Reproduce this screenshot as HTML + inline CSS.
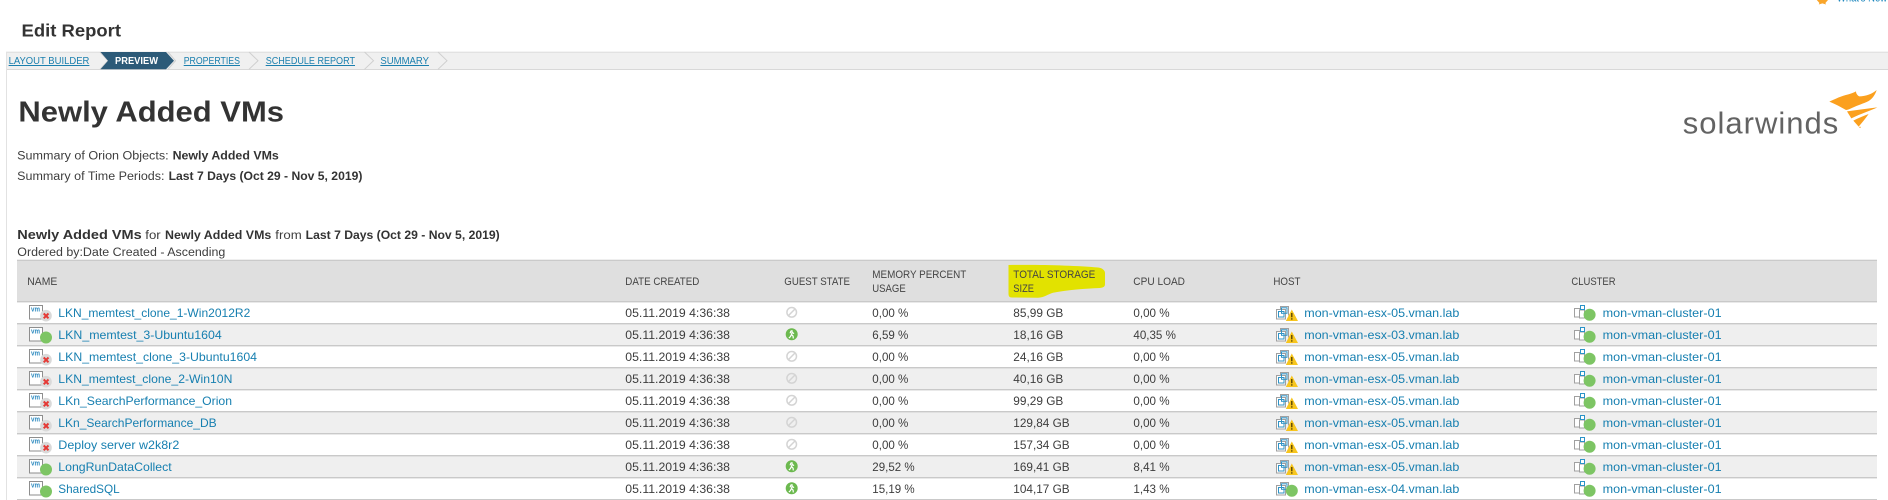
<!DOCTYPE html>
<html><head><meta charset="utf-8"><title>Edit Report</title>
<style>
html,body{margin:0;padding:0;background:#fff;width:1888px;height:500px;overflow:hidden}
svg{display:block}
text{font-family:"Liberation Sans",sans-serif;white-space:pre}
.t{font-size:12px;fill:#3d3d3d}
.l{font-size:12px;fill:#167fb0}
.h{font-size:11px;fill:#444}
.b{font-weight:bold;fill:#333}
.n{font-size:10px;fill:#1a7fae;text-decoration:underline}
.vm{font-size:7px;font-weight:bold;fill:#2e8bc0}
</style></head><body>
<svg width="1888" height="500" viewBox="0 0 1888 500" xmlns="http://www.w3.org/2000/svg">
<defs>
<g id="vm"><rect x="29.5" y="4.5" width="13" height="13.5" fill="#fff" stroke="#8e8e8e"/></g>
<g id="sx"><circle cx="46" cy="14.7" r="5.8" fill="#d9d9d9"/><path d="M43.7 12.5L48.5 17.3M48.5 12.5L43.7 17.3" stroke="#e53935" stroke-width="2" fill="none"/></g>
<circle id="sg" cx="46" cy="14.5" r="6" fill="#7dc564"/>
<g id="goff"><circle cx="791.7" cy="11.3" r="4.8" fill="none" stroke="#d4d4d4" stroke-width="1.5"/><path d="M788.4 14.6L795 8" stroke="#d4d4d4" stroke-width="1.5"/></g>
<g id="grun"><circle cx="791.7" cy="11.3" r="6" fill="#6cb94f"/><path d="M792.5 7.5l-1.6 .6-.8 2.2M792.3 8.2l-.8 3.4 1.6 1.6 .2 2.2M791.3 11.8l-1 2-1.4 1.2M792 9.2l2 1.4" fill="none" stroke="#fff" stroke-width="1.2"/></g>
<g id="hbox"><path d="M1280.5 9V5.5h8v3M1288.5 5.5v9" fill="none" stroke="#a0a0a0"/><rect x="1276.5" y="8.5" width="9" height="9.5" fill="#fff" stroke="#a0a0a0"/><rect x="1281.5" y="6.8" width="5.5" height="5.5" fill="none" stroke="#2f93c6" stroke-width="1"/><rect x="1278.5" y="10.5" width="5.5" height="5.5" fill="none" stroke="#2f93c6" stroke-width="1"/></g>
<g id="hw"><path d="M1291.8 8.5L1298 20H1285.8Z" fill="#f7c51e"/><path d="M1291.8 12v4.2M1291.8 17.2v1.4" stroke="#4a3a00" stroke-width="1.3"/></g>
<circle id="hg" cx="1291.8" cy="13.7" r="6" fill="#7dc564"/>
<g id="cl"><rect x="1574.5" y="7.5" width="5.5" height="8.5" fill="#fff" stroke="#a0a0a0"/><rect x="1579.5" y="9" width="5" height="8" fill="#fff" stroke="#a0a0a0"/><rect x="1580.5" y="4.5" width="4" height="4" fill="#fff" stroke="#2a93c8"/><circle cx="1589.6" cy="13.7" r="6" fill="#7dc564"/></g>
</defs>

<!-- top right remnants -->
<path d="M1816.8 0H1828L1825.4 3L1826 4.5L1822.4 3.4L1818.8 4.5L1819.4 3Z" fill="#f9a52a"/>
<text x="1837" y="1.5" font-size="12" fill="#1b86bd" textLength="50" lengthAdjust="spacingAndGlyphs">What's New</text>

<text x="21.5" y="36.7" font-size="17.5" font-weight="bold" fill="#333" textLength="99.5" lengthAdjust="spacingAndGlyphs">Edit Report</text>

<!-- nav -->
<rect x="6" y="52" width="1882" height="17.5" fill="#f0f0f0"/>
<rect x="6" y="51.7" width="1882" height="1" fill="#dcdcdc"/>
<rect x="6" y="69" width="1882" height="1" fill="#d8d8d8"/>
<rect x="6" y="52" width="1" height="448" fill="#e2e2e2"/>
<path d="M100 52L108 60.7L100 69.3" fill="none" stroke="#d0d0d0"/>
<path d="M100.5 52H166L174 60.7L166 69.3H100.5L108 60.7Z" fill="#2c5a78"/>
<path d="M168 52L175.5 60.7L168 69.3" fill="none" stroke="#d0d0d0"/>
<path d="M249 52L258 60.7L249 69.3M364.5 52L373.5 60.7L364.5 69.3M438 52L447 60.7L438 69.3" fill="none" stroke="#cfcfcf"/>
<text class="n" x="8.6" y="64" textLength="80.8" lengthAdjust="spacingAndGlyphs">LAYOUT BUILDER</text>
<text x="115" y="64" font-size="10" font-weight="bold" fill="#fff" textLength="43" lengthAdjust="spacingAndGlyphs">PREVIEW</text>
<text class="n" x="183.7" y="64" textLength="56.3" lengthAdjust="spacingAndGlyphs">PROPERTIES</text>
<text class="n" x="265.7" y="64" textLength="89.3" lengthAdjust="spacingAndGlyphs">SCHEDULE REPORT</text>
<text class="n" x="380.4" y="64" textLength="48.6" lengthAdjust="spacingAndGlyphs">SUMMARY</text>

<!-- title -->
<text x="18.4" y="121.7" font-size="29" font-weight="bold" fill="#333" textLength="265.6" lengthAdjust="spacingAndGlyphs">Newly Added VMs</text>
<text class="t" x="17.2" y="159.3" textLength="151.4" lengthAdjust="spacingAndGlyphs" style="font-size:11.5px">Summary of Orion Objects:</text>
<text class="t b" x="172.6" y="159.3" textLength="106.2" lengthAdjust="spacingAndGlyphs" style="font-size:11.5px">Newly Added VMs</text>
<text class="t" x="17.2" y="180" textLength="147.3" lengthAdjust="spacingAndGlyphs" style="font-size:11.5px">Summary of Time Periods:</text>
<text class="t b" x="168.6" y="180" textLength="193.8" lengthAdjust="spacingAndGlyphs" style="font-size:11.5px">Last 7 Days (Oct 29 - Nov 5, 2019)</text>

<!-- logo -->
<g transform="translate(1500,0) scale(.33333)">
<path d="M988 305C1005 297 1025 287 1045 283C1055 280 1063 277 1068 274C1068 280 1072 286 1078 289C1097 289 1117 282 1130 270C1126 283 1118 296 1106 303C1090 311 1072 316 1058 323C1050 327 1044 330 1038 330C1022 321 1005 312 988 305Z" fill="#fba01e"/>
<path d="M1041 334C1070 330 1100 326 1132 322C1112 332 1084 340 1054 355Z" fill="#fba01e"/>
<path d="M1060 362C1075 354 1090 348 1106 342C1096 356 1086 368 1076 380Z" fill="#fba01e"/>
<circle cx="1080" cy="382" r="2" fill="#fba01e"/>
</g>
<text x="1682.7" y="133.3" font-size="31" fill="#636363" textLength="155.6" lengthAdjust="spacing">solarwinds</text>

<!-- report heading -->
<text class="b" x="17.3" y="239" font-size="12.5" textLength="124.4" lengthAdjust="spacingAndGlyphs">Newly Added VMs</text>
<text class="t" x="145.3" y="239" style="font-size:11.5px" textLength="15.4" lengthAdjust="spacingAndGlyphs">for</text>
<text class="b" x="165" y="239" font-size="11.5" textLength="106.3" lengthAdjust="spacingAndGlyphs">Newly Added VMs</text>
<text class="t" x="275.3" y="239" style="font-size:11.5px" textLength="26.4" lengthAdjust="spacingAndGlyphs">from</text>
<text class="b" x="305.7" y="239" font-size="11.5" textLength="194" lengthAdjust="spacingAndGlyphs">Last 7 Days (Oct 29 - Nov 5, 2019)</text>
<text class="t" x="17.3" y="256" style="font-size:11.5px" textLength="208" lengthAdjust="spacingAndGlyphs">Ordered by:Date Created - Ascending</text>

<!-- header -->
<rect x="17" y="260" width="1860" height="42" fill="#dfdfdf"/>
<rect x="17" y="259.7" width="1860" height="1.3" fill="#cacaca"/>
<path d="M1008.5 265C1040 264.5 1075 265.5 1098 267.5C1102 268 1105 270 1105 273V284C1105 287 1103 287.5 1100 288C1085 288.5 1068 290 1053 292.7C1048 294 1044 297.6 1038 297.7L1012 297.5C1009 297.5 1008.5 296 1008.5 293V282L1008.5 280.5Z" fill="#e2e200"/>
<text class="h" x="27.3" y="285" textLength="30" lengthAdjust="spacingAndGlyphs">NAME</text>
<text class="h" x="625.3" y="285" textLength="74" lengthAdjust="spacingAndGlyphs">DATE CREATED</text>
<text class="h" x="784.3" y="285" textLength="65.7" lengthAdjust="spacingAndGlyphs">GUEST STATE</text>
<text class="h" x="872.3" y="278" textLength="94" lengthAdjust="spacingAndGlyphs">MEMORY PERCENT</text>
<text class="h" x="872.3" y="292" textLength="33.4" lengthAdjust="spacingAndGlyphs">USAGE</text>
<text class="h" x="1013.3" y="278" textLength="82" lengthAdjust="spacingAndGlyphs">TOTAL STORAGE</text>
<text class="h" x="1013.3" y="292" textLength="20.7" lengthAdjust="spacingAndGlyphs">SIZE</text>
<text class="h" x="1133.3" y="285" textLength="51.7" lengthAdjust="spacingAndGlyphs">CPU LOAD</text>
<text class="h" x="1273.4" y="285" textLength="27.1" lengthAdjust="spacingAndGlyphs">HOST</text>
<text class="h" x="1571.4" y="285" textLength="44.2" lengthAdjust="spacingAndGlyphs">CLUSTER</text>

<!-- rows -->
<g transform="translate(0,301)">
<rect x="17" y="0" width="1860" height="22" fill="#fff"/><rect x="17" y="0" width="1860" height="1.4" fill="#c9c9c9"/>
<use href="#vm"/><text class="vm" x="31" y="10.5" textLength="9" lengthAdjust="spacingAndGlyphs">vm</text><use href="#sx"/>
<text class="l" x="58.3" y="16" textLength="192" lengthAdjust="spacingAndGlyphs">LKN_memtest_clone_1-Win2012R2</text>
<text class="t" x="625.3" y="16" textLength="104.7" lengthAdjust="spacingAndGlyphs">05.11.2019 4:36:38</text><use href="#goff"/>
<text class="t" x="872.3" y="16" textLength="36" lengthAdjust="spacingAndGlyphs">0,00 %</text>
<text class="t" x="1013.3" y="16" textLength="50" lengthAdjust="spacingAndGlyphs">85,99 GB</text>
<text class="t" x="1133.4" y="16" textLength="36.2" lengthAdjust="spacingAndGlyphs">0,00 %</text>
<use href="#hbox"/><use href="#hw"/><text class="l" x="1304.3" y="16" textLength="155" lengthAdjust="spacingAndGlyphs">mon-vman-esx-05.vman.lab</text>
<use href="#cl"/><text class="l" x="1602.6" y="16" textLength="119" lengthAdjust="spacingAndGlyphs">mon-vman-cluster-01</text>
</g>
<g transform="translate(0,323)">
<rect x="17" y="0" width="1860" height="22" fill="#efefef"/><rect x="17" y="0" width="1860" height="1.4" fill="#c9c9c9"/>
<use href="#vm"/><text class="vm" x="31" y="10.5" textLength="9" lengthAdjust="spacingAndGlyphs">vm</text><use href="#sg"/>
<text class="l" x="58.3" y="16" textLength="163.4" lengthAdjust="spacingAndGlyphs">LKN_memtest_3-Ubuntu1604</text>
<text class="t" x="625.3" y="16" textLength="104.7" lengthAdjust="spacingAndGlyphs">05.11.2019 4:36:38</text><use href="#grun"/>
<text class="t" x="872.3" y="16" textLength="36" lengthAdjust="spacingAndGlyphs">6,59 %</text>
<text class="t" x="1013.3" y="16" textLength="50" lengthAdjust="spacingAndGlyphs">18,16 GB</text>
<text class="t" x="1133.4" y="16" textLength="42.5" lengthAdjust="spacingAndGlyphs">40,35 %</text>
<use href="#hbox"/><use href="#hw"/><text class="l" x="1304.3" y="16" textLength="155" lengthAdjust="spacingAndGlyphs">mon-vman-esx-03.vman.lab</text>
<use href="#cl"/><text class="l" x="1602.6" y="16" textLength="119" lengthAdjust="spacingAndGlyphs">mon-vman-cluster-01</text>
</g>
<g transform="translate(0,345)">
<rect x="17" y="0" width="1860" height="22" fill="#fff"/><rect x="17" y="0" width="1860" height="1.4" fill="#c9c9c9"/>
<use href="#vm"/><text class="vm" x="31" y="10.5" textLength="9" lengthAdjust="spacingAndGlyphs">vm</text><use href="#sx"/>
<text class="l" x="58.3" y="16" textLength="198.7" lengthAdjust="spacingAndGlyphs">LKN_memtest_clone_3-Ubuntu1604</text>
<text class="t" x="625.3" y="16" textLength="104.7" lengthAdjust="spacingAndGlyphs">05.11.2019 4:36:38</text><use href="#goff"/>
<text class="t" x="872.3" y="16" textLength="36" lengthAdjust="spacingAndGlyphs">0,00 %</text>
<text class="t" x="1013.3" y="16" textLength="50" lengthAdjust="spacingAndGlyphs">24,16 GB</text>
<text class="t" x="1133.4" y="16" textLength="36.2" lengthAdjust="spacingAndGlyphs">0,00 %</text>
<use href="#hbox"/><use href="#hw"/><text class="l" x="1304.3" y="16" textLength="155" lengthAdjust="spacingAndGlyphs">mon-vman-esx-05.vman.lab</text>
<use href="#cl"/><text class="l" x="1602.6" y="16" textLength="119" lengthAdjust="spacingAndGlyphs">mon-vman-cluster-01</text>
</g>
<g transform="translate(0,367)">
<rect x="17" y="0" width="1860" height="22" fill="#efefef"/><rect x="17" y="0" width="1860" height="1.4" fill="#c9c9c9"/>
<use href="#vm"/><text class="vm" x="31" y="10.5" textLength="9" lengthAdjust="spacingAndGlyphs">vm</text><use href="#sx"/>
<text class="l" x="58.3" y="16" textLength="174.1" lengthAdjust="spacingAndGlyphs">LKN_memtest_clone_2-Win10N</text>
<text class="t" x="625.3" y="16" textLength="104.7" lengthAdjust="spacingAndGlyphs">05.11.2019 4:36:38</text><use href="#goff"/>
<text class="t" x="872.3" y="16" textLength="36" lengthAdjust="spacingAndGlyphs">0,00 %</text>
<text class="t" x="1013.3" y="16" textLength="50" lengthAdjust="spacingAndGlyphs">40,16 GB</text>
<text class="t" x="1133.4" y="16" textLength="36.2" lengthAdjust="spacingAndGlyphs">0,00 %</text>
<use href="#hbox"/><use href="#hw"/><text class="l" x="1304.3" y="16" textLength="155" lengthAdjust="spacingAndGlyphs">mon-vman-esx-05.vman.lab</text>
<use href="#cl"/><text class="l" x="1602.6" y="16" textLength="119" lengthAdjust="spacingAndGlyphs">mon-vman-cluster-01</text>
</g>
<g transform="translate(0,389)">
<rect x="17" y="0" width="1860" height="22" fill="#fff"/><rect x="17" y="0" width="1860" height="1.4" fill="#c9c9c9"/>
<use href="#vm"/><text class="vm" x="31" y="10.5" textLength="9" lengthAdjust="spacingAndGlyphs">vm</text><use href="#sx"/>
<text class="l" x="58.3" y="16" textLength="173.7" lengthAdjust="spacingAndGlyphs">LKn_SearchPerformance_Orion</text>
<text class="t" x="625.3" y="16" textLength="104.7" lengthAdjust="spacingAndGlyphs">05.11.2019 4:36:38</text><use href="#goff"/>
<text class="t" x="872.3" y="16" textLength="36" lengthAdjust="spacingAndGlyphs">0,00 %</text>
<text class="t" x="1013.3" y="16" textLength="50" lengthAdjust="spacingAndGlyphs">99,29 GB</text>
<text class="t" x="1133.4" y="16" textLength="36.2" lengthAdjust="spacingAndGlyphs">0,00 %</text>
<use href="#hbox"/><use href="#hw"/><text class="l" x="1304.3" y="16" textLength="155" lengthAdjust="spacingAndGlyphs">mon-vman-esx-05.vman.lab</text>
<use href="#cl"/><text class="l" x="1602.6" y="16" textLength="119" lengthAdjust="spacingAndGlyphs">mon-vman-cluster-01</text>
</g>
<g transform="translate(0,411)">
<rect x="17" y="0" width="1860" height="22" fill="#efefef"/><rect x="17" y="0" width="1860" height="1.4" fill="#c9c9c9"/>
<use href="#vm"/><text class="vm" x="31" y="10.5" textLength="9" lengthAdjust="spacingAndGlyphs">vm</text><use href="#sx"/>
<text class="l" x="58.3" y="16" textLength="158.4" lengthAdjust="spacingAndGlyphs">LKn_SearchPerformance_DB</text>
<text class="t" x="625.3" y="16" textLength="104.7" lengthAdjust="spacingAndGlyphs">05.11.2019 4:36:38</text><use href="#goff"/>
<text class="t" x="872.3" y="16" textLength="36" lengthAdjust="spacingAndGlyphs">0,00 %</text>
<text class="t" x="1013.3" y="16" textLength="56.3" lengthAdjust="spacingAndGlyphs">129,84 GB</text>
<text class="t" x="1133.4" y="16" textLength="36.2" lengthAdjust="spacingAndGlyphs">0,00 %</text>
<use href="#hbox"/><use href="#hw"/><text class="l" x="1304.3" y="16" textLength="155" lengthAdjust="spacingAndGlyphs">mon-vman-esx-05.vman.lab</text>
<use href="#cl"/><text class="l" x="1602.6" y="16" textLength="119" lengthAdjust="spacingAndGlyphs">mon-vman-cluster-01</text>
</g>
<g transform="translate(0,433)">
<rect x="17" y="0" width="1860" height="22" fill="#fff"/><rect x="17" y="0" width="1860" height="1.4" fill="#c9c9c9"/>
<use href="#vm"/><text class="vm" x="31" y="10.5" textLength="9" lengthAdjust="spacingAndGlyphs">vm</text><use href="#sx"/>
<text class="l" x="58.3" y="16" textLength="121" lengthAdjust="spacingAndGlyphs">Deploy server w2k8r2</text>
<text class="t" x="625.3" y="16" textLength="104.7" lengthAdjust="spacingAndGlyphs">05.11.2019 4:36:38</text><use href="#goff"/>
<text class="t" x="872.3" y="16" textLength="36" lengthAdjust="spacingAndGlyphs">0,00 %</text>
<text class="t" x="1013.3" y="16" textLength="56.3" lengthAdjust="spacingAndGlyphs">157,34 GB</text>
<text class="t" x="1133.4" y="16" textLength="36.2" lengthAdjust="spacingAndGlyphs">0,00 %</text>
<use href="#hbox"/><use href="#hw"/><text class="l" x="1304.3" y="16" textLength="155" lengthAdjust="spacingAndGlyphs">mon-vman-esx-05.vman.lab</text>
<use href="#cl"/><text class="l" x="1602.6" y="16" textLength="119" lengthAdjust="spacingAndGlyphs">mon-vman-cluster-01</text>
</g>
<g transform="translate(0,455)">
<rect x="17" y="0" width="1860" height="22" fill="#efefef"/><rect x="17" y="0" width="1860" height="1.4" fill="#c9c9c9"/>
<use href="#vm"/><text class="vm" x="31" y="10.5" textLength="9" lengthAdjust="spacingAndGlyphs">vm</text><use href="#sg"/>
<text class="l" x="58.3" y="16" textLength="113.4" lengthAdjust="spacingAndGlyphs">LongRunDataCollect</text>
<text class="t" x="625.3" y="16" textLength="104.7" lengthAdjust="spacingAndGlyphs">05.11.2019 4:36:38</text><use href="#grun"/>
<text class="t" x="872.3" y="16" textLength="42.3" lengthAdjust="spacingAndGlyphs">29,52 %</text>
<text class="t" x="1013.3" y="16" textLength="56.3" lengthAdjust="spacingAndGlyphs">169,41 GB</text>
<text class="t" x="1133.4" y="16" textLength="36.2" lengthAdjust="spacingAndGlyphs">8,41 %</text>
<use href="#hbox"/><use href="#hw"/><text class="l" x="1304.3" y="16" textLength="155" lengthAdjust="spacingAndGlyphs">mon-vman-esx-05.vman.lab</text>
<use href="#cl"/><text class="l" x="1602.6" y="16" textLength="119" lengthAdjust="spacingAndGlyphs">mon-vman-cluster-01</text>
</g>
<g transform="translate(0,477)">
<rect x="17" y="0" width="1860" height="22" fill="#fff"/><rect x="17" y="0" width="1860" height="1.4" fill="#c9c9c9"/>
<use href="#vm"/><text class="vm" x="31" y="10.5" textLength="9" lengthAdjust="spacingAndGlyphs">vm</text><use href="#sg"/>
<text class="l" x="58.3" y="16" textLength="61.4" lengthAdjust="spacingAndGlyphs">SharedSQL</text>
<text class="t" x="625.3" y="16" textLength="104.7" lengthAdjust="spacingAndGlyphs">05.11.2019 4:36:38</text><use href="#grun"/>
<text class="t" x="872.3" y="16" textLength="42.3" lengthAdjust="spacingAndGlyphs">15,19 %</text>
<text class="t" x="1013.3" y="16" textLength="56.3" lengthAdjust="spacingAndGlyphs">104,17 GB</text>
<text class="t" x="1133.4" y="16" textLength="36.2" lengthAdjust="spacingAndGlyphs">1,43 %</text>
<use href="#hbox"/><use href="#hg"/><text class="l" x="1304.3" y="16" textLength="155" lengthAdjust="spacingAndGlyphs">mon-vman-esx-04.vman.lab</text>
<use href="#cl"/><text class="l" x="1602.6" y="16" textLength="119" lengthAdjust="spacingAndGlyphs">mon-vman-cluster-01</text>
</g>
<rect x="17" y="499" width="1860" height="1" fill="#c9c9c9"/>
</svg>
</body></html>
